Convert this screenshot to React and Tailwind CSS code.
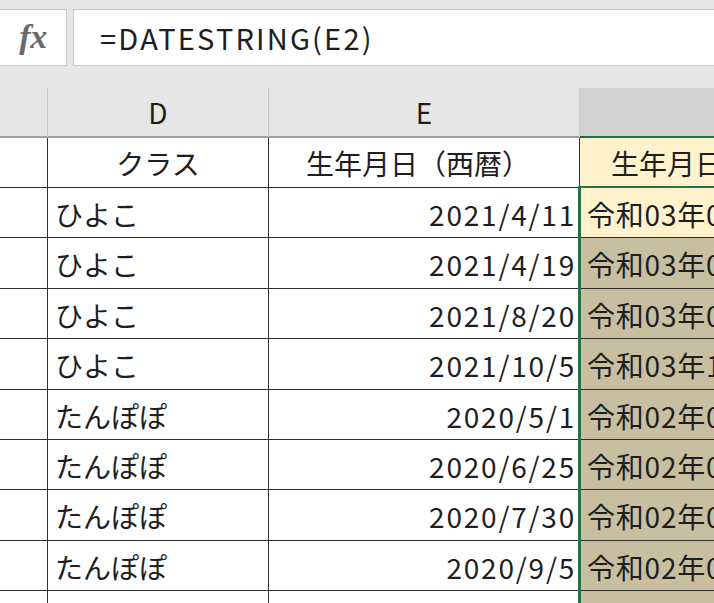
import React from "react";

const rows = [
  { d: "ひよこ", e: "2021/4/11", f: "令和03年04月11日", h: "h-[50px]" },
  { d: "ひよこ", e: "2021/4/19", f: "令和03年04月19日", h: "h-[51px]" },
  { d: "ひよこ", e: "2021/8/20", f: "令和03年08月20日", h: "h-[50px]" },
  { d: "ひよこ", e: "2021/10/5", f: "令和03年10月05日", h: "h-[51px]" },
  { d: "たんぽぽ", e: "2020/5/1", f: "令和02年05月01日", h: "h-[50px]" },
  { d: "たんぽぽ", e: "2020/6/25", f: "令和02年06月25日", h: "h-[50px]" },
  { d: "たんぽぽ", e: "2020/7/30", f: "令和02年07月30日", h: "h-[51px]" },
  { d: "たんぽぽ", e: "2020/9/5", f: "令和02年09月05日", h: "h-[50px]" },
  { d: "たんぽぽ", e: "2020/10/1", f: "令和02年10月01日", h: "h-[50px]" },
];

const jp = { fontFamily: '"Noto Sans CJK JP", "Noto Sans", sans-serif' };

export default function App() {
  return (
    <div
      className="w-[714px] h-[603px] overflow-hidden bg-[#e6e6e6] text-[#1e1e1e]"
      style={jp}
    >
      {/* formula bar */}
      <div className="flex h-[66px] pt-[9px] gap-[6px]">
        <div className="w-[67px] h-[57px] bg-white border border-[#c6c6c6] border-l-0 flex items-center justify-center">
          <span
            className="text-[34px] italic font-semibold text-[#6a6a6a] leading-none -mt-[1px] tracking-[-0.5px]"
            style={{ fontFamily: '"Liberation Serif", serif' }}
          >
            fx
          </span>
        </div>
        <div className="flex-1 h-[57px] bg-white border border-[#c6c6c6] border-r-0 flex items-center pl-[26px]">
          <span className="text-[29px] leading-none tracking-[2.2px]">=DATESTRING(E2)</span>
        </div>
      </div>

      {/* column headers */}
      <div className="flex mt-[22px] h-[50px]">
        <div className="w-[48px] border-r border-[#c8c8c8] border-b-2 border-b-[#a0a0a0]" />
        <div className="w-[221px] border-r border-[#c8c8c8] border-b-2 border-b-[#a0a0a0] flex items-center justify-center text-[28px] pb-[1px]">
          D
        </div>
        <div className="w-[311px] border-r border-[#c8c8c8] border-b-2 border-b-[#a0a0a0] flex items-center justify-center text-[28px] pb-[1px]">
          E
        </div>
        <div className="flex-1 bg-[#d2d2d2] border-b-2 border-b-[#217346]" />
      </div>

      {/* grid */}
      <div className="relative bg-white">
        <div className="flex h-[50px] border-b border-[#2e2e2e]">
          <div className="w-[48px] shrink-0 border-r border-[#2e2e2e]" />
          <div className="w-[221px] shrink-0 border-r border-[#2e2e2e] flex items-center justify-center text-[28px] pt-[1px]">
            クラス
          </div>
          <div className="w-[311px] shrink-0 border-r border-[#2e2e2e] flex items-center justify-center text-[28px] pt-[1px] pr-[12px]">
            生年月日（西暦）
          </div>
          <div className="flex-1 bg-[#fff2cc] flex items-center pl-[31px] text-[28px] pt-[1px] whitespace-nowrap overflow-hidden">
            生年月日（和暦）
          </div>
        </div>
        {rows.map((r, i) => (
          <div key={i} className={`flex ${r.h} border-b border-[#2e2e2e]`}>
            <div className="w-[48px] shrink-0 border-r border-[#2e2e2e]" />
            <div className="w-[221px] shrink-0 border-r border-[#2e2e2e] flex items-center pl-[7px] text-[28px] pt-[2px]">
              {r.d}
            </div>
            <div className="w-[311px] shrink-0 border-r border-[#2e2e2e] flex items-center justify-end pr-[3px] text-[28px] pt-[2px] tracking-[1.8px]">
              {r.e}
            </div>
            <div
              className={`flex-1 flex items-center pl-[7px] text-[28px] pt-[2px] whitespace-nowrap overflow-hidden tracking-[0.8px] ${
                i === 0 ? "bg-[#fff2cc]" : "bg-[#c8bfa0]"
              }`}
            >
              {r.f}
            </div>
          </div>
        ))}
        {/* selection border */}
        <div className="absolute left-[578px] top-[48px] w-[200px] h-[600px] border-l-[3px] border-t-2 border-[#217346] pointer-events-none" />
      </div>
    </div>
  );
}
